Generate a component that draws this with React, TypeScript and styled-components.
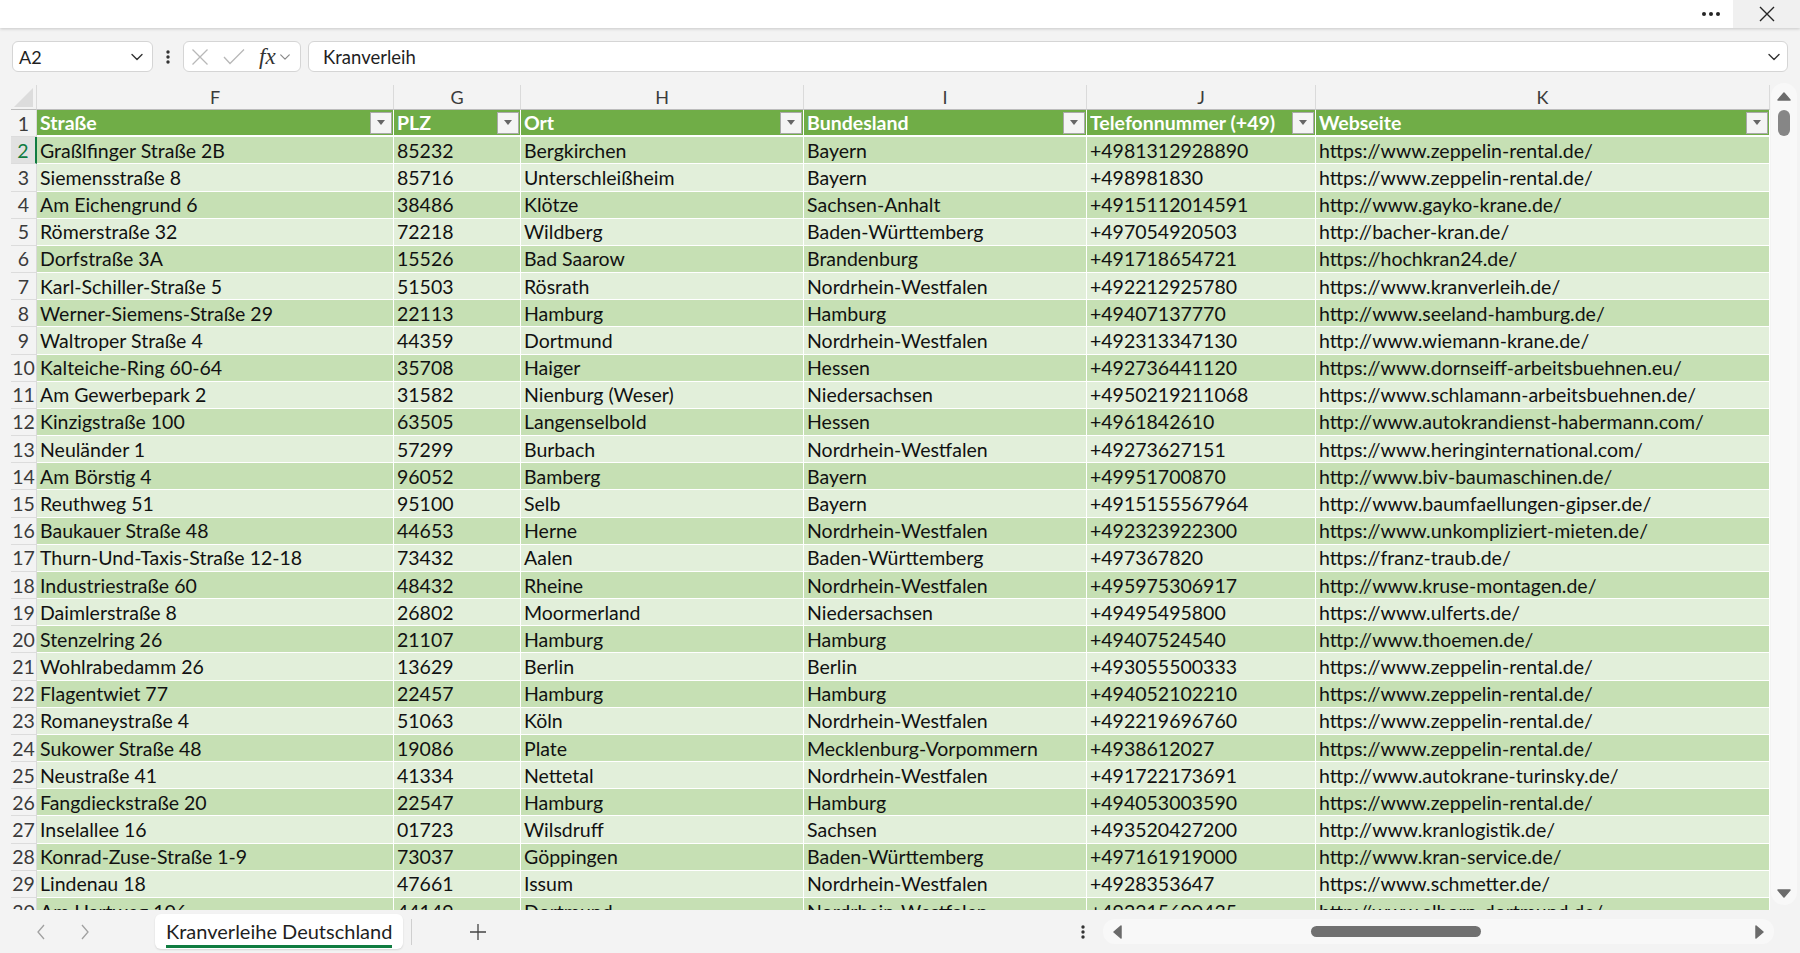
import React, { FC } from 'react'
import styled, { createGlobalStyle } from 'styled-components'

const GlobalStyle = createGlobalStyle`
  html, body {
    margin: 0;
    padding: 0;
    background: #f3f3f3;
  }
`

const COLUMNS = '26px 357px 127px 283px 283px 229px 454px'
const ROW_HEIGHT = 27.18

const Page = styled.div`
  display: flex;
  flex-direction: column;
  width: 1800px;
  height: 953px;
  overflow: hidden;

  background-color: #f3f3f3;
  font-family: Lato, 'Noto Sans', sans-serif;
  color: #1f1f1f;
`

const TopBar = styled.div`
  position: relative;
  z-index: 2;
  display: flex;
  justify-content: flex-end;
  flex: 0 0 28px;

  background-color: white;
  box-shadow: 0 1px 3px rgba(0, 0, 0, 0.18);
`

const MoreButton = styled.div`
  display: flex;
  align-items: center;
  gap: 3px;
  padding: 0 13px 0 11px;
`

const Dot = styled.span`
  width: 4px;
  height: 4px;
  border-radius: 50%;
  background-color: #242424;
`

const CloseButton = styled.div`
  display: grid;
  place-items: center;
  width: 67px;

  background-color: #f0f0f0;
`

const FormulaRow = styled.div`
  display: flex;
  align-items: center;
  flex: 0 0 31px;
  margin-top: 13px;
  padding: 0 12px;
`

const Box = styled.div`
  display: flex;
  align-items: center;
  height: 31px;
  box-sizing: border-box;

  background-color: white;
  border: 1px solid #d5d5d5;
  border-radius: 6px;
`

const NameBox = styled(Box)`
  justify-content: space-between;
  width: 141px;
  padding: 0 8px 0 6px;

  font-size: 18px;
`

const Kebab = styled.div`
  display: grid;
  place-items: center;
  width: 30px;
`

const FxBox = styled(Box)`
  width: 118px;
  padding: 0 4px 0 7px;
`

const Fx = styled.span`
  margin: 0 3px 0 12px;

  font-family: 'Liberation Serif', serif;
  font-style: italic;
  font-size: 23px;
  color: #333;
`

const FormulaInput = styled(Box)`
  flex: 1;
  justify-content: space-between;
  margin-left: 7px;
  padding: 0 6px 0 14px;

  font-size: 18.5px;
`

const SheetArea = styled.div`
  display: flex;
  flex: 1;
  min-height: 0;
  margin-top: 11px;
  padding-left: 11px;
`

const Grid = styled.div`
  width: 1759px;
  padding-top: 2px;
  overflow: hidden;
`

const Row = styled.div<{ $height: number }>`
  display: grid;
  grid-template-columns: ${COLUMNS};
  height: ${(p) => p.$height}px;
`

const ColumnLetter = styled.div`
  display: grid;
  place-items: center;
  box-sizing: border-box;

  border-right: 1px solid #dadada;
  border-bottom: 1px solid #bcbcbc;
  font-size: 18px;
  color: #3b3b3b;
`

const Corner = styled.div`
  position: relative;
  box-sizing: border-box;

  border-bottom: 1px solid #bcbcbc;
  border-right: 1px solid #dadada;

  &::after {
    content: '';
    position: absolute;
    right: 3px;
    bottom: 2px;
    border-style: solid;
    border-width: 0 0 19px 19px;
    border-color: transparent transparent #dcdcdc transparent;
  }
`

const RowNumber = styled.div<{ $active?: boolean }>`
  display: grid;
  place-items: center;
  box-sizing: border-box;

  background-color: ${(p) => (p.$active ? '#e1e1e1' : 'transparent')};
  border-bottom: 1px solid #dcdcdc;
  border-right: ${(p) => (p.$active ? '2px solid #107c41' : '1px solid #dadada')};
  font-size: 19.5px;
  color: ${(p) => (p.$active ? '#107c41' : '#3b3b3b')};
`

const Cell = styled.div<{ $tone: 'head' | 'dark' | 'light' }>`
  display: flex;
  align-items: center;
  box-sizing: border-box;
  padding: 0 0 0 3px;
  overflow: hidden;

  background-color: ${(p) => (p.$tone === 'head' ? '#70ad47' : p.$tone === 'dark' ? '#c6e0b4' : '#e2efda')};
  border-right: 1px solid #ffffff;
  border-bottom: ${(p) => (p.$tone === 'head' ? '2px' : '1px')} solid #ffffff;
  font-size: 19.5px;
  font-weight: ${(p) => (p.$tone === 'head' ? 700 : 400)};
  color: ${(p) => (p.$tone === 'head' ? 'white' : '#111')};
  white-space: nowrap;
`

const HeadLabel = styled.span`
  flex: 1;
  overflow: hidden;
`

const FilterButton = styled.div`
  display: grid;
  place-items: center;
  flex: 0 0 22px;
  height: 22px;
  box-sizing: border-box;
  margin-right: 1px;

  background-color: #f4f4f4;
  border: 1px solid #a9a9a9;

  &::after {
    content: '';
    border-style: solid;
    border-width: 5px 4px 0 4px;
    border-color: #666 transparent transparent transparent;
  }
`

const VScroll = styled.div`
  display: flex;
  flex-direction: column;
  align-items: center;
  width: 26px;
  margin: 0 2px 5px 1px;
  padding: 7px 0 5px;
  box-sizing: border-box;

  background-color: #f8f8f8;
  border-radius: 13px;
`

const VThumb = styled.div`
  width: 12px;
  height: 26px;
  margin-top: 6px;

  background-color: #868686;
  border-radius: 6px;
`

const Spacer = styled.div`
  flex: 1;
`

const BottomBar = styled.div`
  display: flex;
  align-items: center;
  flex: 0 0 43px;
  padding-left: 30px;
`

const NavArrow = styled.div`
  display: grid;
  place-items: center;
  width: 22px;
  margin-right: 22px;
`

const SheetTab = styled.div`
  display: flex;
  align-items: center;
  justify-content: center;
  height: 35px;
  margin-left: 37px;
  padding: 0 11px;
  box-sizing: border-box;

  background-color: white;
  border-radius: 6px;
  box-shadow: 0 1px 2px rgba(0, 0, 0, 0.12);
`

const TabLabel = styled.span`
  padding: 4px 0 2px;

  border-bottom: 3px solid #107c41;
  font-size: 20px;
  color: #1f1f1f;
`

const TabDivider = styled.div`
  width: 1px;
  height: 26px;
  margin-left: 8px;

  background-color: #cfcfcf;
`

const AddSheet = styled.div`
  display: grid;
  place-items: center;
  margin-left: 57px;
`

const HScroll = styled.div`
  display: flex;
  align-items: center;
  justify-content: space-between;
  width: 671px;
  height: 25px;
  margin: 0 26px 0 18px;
  padding: 0 8px;
  box-sizing: border-box;

  background-color: #f8f8f8;
  border-radius: 12px;
`

const HThumb = styled.div`
  width: 170px;
  height: 11px;
  margin-left: 186px;

  background-color: #707070;
  border-radius: 6px;
`

const Chevron: FC<{ size?: number; color?: string }> = ({ size = 14, color = '#333' }) => (
  <svg width={size} height={size} viewBox="0 0 14 14" fill="none">
    <path d="M2 4.5 L7 9.5 L12 4.5" stroke={color} strokeWidth="1.4" strokeLinecap="round" strokeLinejoin="round" />
  </svg>
)

const VDots: FC = () => (
  <svg width="4" height="14" viewBox="0 0 4 14">
    <circle cx="2" cy="2" r="1.7" fill="#333" />
    <circle cx="2" cy="7" r="1.7" fill="#333" />
    <circle cx="2" cy="12" r="1.7" fill="#333" />
  </svg>
)

const Triangle: FC<{ dir: 'up' | 'down' | 'left' | 'right' }> = ({ dir }) => {
  const points = {
    up: '1,10 7,3 13,10',
    down: '1,4 7,11 13,4',
    left: '10,1 3,7 10,13',
    right: '4,1 11,7 4,13',
  }[dir]
  return (
    <svg width="14" height="14" viewBox="0 0 14 14">
      <polygon points={points} fill="#6b6b6b" strokeLinejoin="round" stroke="#6b6b6b" strokeWidth="1.5" />
    </svg>
  )
}

const headers = ['Straße', 'PLZ', 'Ort', 'Bundesland', 'Telefonnummer (+49)', 'Webseite']

const rows: string[][] = [
  ['Graßlfinger Straße 2B', '85232', 'Bergkirchen', 'Bayern', '+4981312928890', 'https://www.zeppelin-rental.de/'],
  ['Siemensstraße 8', '85716', 'Unterschleißheim', 'Bayern', '+498981830', 'https://www.zeppelin-rental.de/'],
  ['Am Eichengrund 6', '38486', 'Klötze', 'Sachsen-Anhalt', '+4915112014591', 'http://www.gayko-krane.de/'],
  ['Römerstraße 32', '72218', 'Wildberg', 'Baden-Württemberg', '+497054920503', 'http://bacher-kran.de/'],
  ['Dorfstraße 3A', '15526', 'Bad Saarow', 'Brandenburg', '+491718654721', 'https://hochkran24.de/'],
  ['Karl-Schiller-Straße 5', '51503', 'Rösrath', 'Nordrhein-Westfalen', '+492212925780', 'https://www.kranverleih.de/'],
  ['Werner-Siemens-Straße 29', '22113', 'Hamburg', 'Hamburg', '+49407137770', 'http://www.seeland-hamburg.de/'],
  ['Waltroper Straße 4', '44359', 'Dortmund', 'Nordrhein-Westfalen', '+492313347130', 'http://www.wiemann-krane.de/'],
  ['Kalteiche-Ring 60-64', '35708', 'Haiger', 'Hessen', '+492736441120', 'https://www.dornseiff-arbeitsbuehnen.eu/'],
  ['Am Gewerbepark 2', '31582', 'Nienburg (Weser)', 'Niedersachsen', '+4950219211068', 'https://www.schlamann-arbeitsbuehnen.de/'],
  ['Kinzigstraße 100', '63505', 'Langenselbold', 'Hessen', '+4961842610', 'http://www.autokrandienst-habermann.com/'],
  ['Neuländer 1', '57299', 'Burbach', 'Nordrhein-Westfalen', '+49273627151', 'https://www.heringinternational.com/'],
  ['Am Börstig 4', '96052', 'Bamberg', 'Bayern', '+49951700870', 'http://www.biv-baumaschinen.de/'],
  ['Reuthweg 51', '95100', 'Selb', 'Bayern', '+4915155567964', 'http://www.baumfaellungen-gipser.de/'],
  ['Baukauer Straße 48', '44653', 'Herne', 'Nordrhein-Westfalen', '+492323922300', 'https://www.unkompliziert-mieten.de/'],
  ['Thurn-Und-Taxis-Straße 12-18', '73432', 'Aalen', 'Baden-Württemberg', '+497367820', 'https://franz-traub.de/'],
  ['Industriestraße 60', '48432', 'Rheine', 'Nordrhein-Westfalen', '+495975306917', 'http://www.kruse-montagen.de/'],
  ['Daimlerstraße 8', '26802', 'Moormerland', 'Niedersachsen', '+49495495800', 'https://www.ulferts.de/'],
  ['Stenzelring 26', '21107', 'Hamburg', 'Hamburg', '+49407524540', 'http://www.thoemen.de/'],
  ['Wohlrabedamm 26', '13629', 'Berlin', 'Berlin', '+493055500333', 'https://www.zeppelin-rental.de/'],
  ['Flagentwiet 77', '22457', 'Hamburg', 'Hamburg', '+494052102210', 'https://www.zeppelin-rental.de/'],
  ['Romaneystraße 4', '51063', 'Köln', 'Nordrhein-Westfalen', '+492219696760', 'https://www.zeppelin-rental.de/'],
  ['Sukower Straße 48', '19086', 'Plate', 'Mecklenburg-Vorpommern', '+4938612027', 'https://www.zeppelin-rental.de/'],
  ['Neustraße 41', '41334', 'Nettetal', 'Nordrhein-Westfalen', '+491722173691', 'http://www.autokrane-turinsky.de/'],
  ['Fangdieckstraße 20', '22547', 'Hamburg', 'Hamburg', '+494053003590', 'https://www.zeppelin-rental.de/'],
  ['Inselallee 16', '01723', 'Wilsdruff', 'Sachsen', '+493520427200', 'http://www.kranlogistik.de/'],
  ['Konrad-Zuse-Straße 1-9', '73037', 'Göppingen', 'Baden-Württemberg', '+497161919000', 'http://www.kran-service.de/'],
  ['Lindenau 18', '47661', 'Issum', 'Nordrhein-Westfalen', '+4928353647', 'https://www.schmetter.de/'],
  ['Am Hartweg 106', '44149', 'Dortmund', 'Nordrhein-Westfalen', '+492315690435', 'http://www.alborn-dortmund.de/'],
]

const letters = ['F', 'G', 'H', 'I', 'J', 'K']

export default function App() {
  return (
    <>
      <GlobalStyle />
      <Page>
        <TopBar>
          <MoreButton>
            <Dot />
            <Dot />
            <Dot />
          </MoreButton>
          <CloseButton>
            <svg width="16" height="16" viewBox="0 0 16 16">
              <path d="M1 1 L15 15 M15 1 L1 15" stroke="#242424" strokeWidth="1.4" />
            </svg>
          </CloseButton>
        </TopBar>

        <FormulaRow>
          <NameBox>
            <span>A2</span>
            <Chevron />
          </NameBox>
          <Kebab>
            <VDots />
          </Kebab>
          <FxBox>
            <svg width="18" height="18" viewBox="0 0 18 18">
              <path d="M1.5 1.5 L16.5 16.5 M16.5 1.5 L1.5 16.5" stroke="#b8b8b8" strokeWidth="1.3" />
            </svg>
            <svg width="26" height="18" viewBox="0 0 26 18" style={{ marginLeft: 12 }}>
              <path d="M3 9 L9 15.5 L23 1.5" stroke="#b8b8b8" strokeWidth="1.3" fill="none" />
            </svg>
            <Fx>fx</Fx>
            <Chevron size={12} color="#888" />
          </FxBox>
          <FormulaInput>
            <span>Kranverleih</span>
            <Chevron />
          </FormulaInput>
        </FormulaRow>

        <SheetArea>
          <Grid>
            <Row $height={25}>
              <Corner />
              {letters.map((l) => (
                <ColumnLetter key={l}>{l}</ColumnLetter>
              ))}
            </Row>
            <Row $height={ROW_HEIGHT}>
              <RowNumber>1</RowNumber>
              {headers.map((h) => (
                <Cell key={h} $tone="head">
                  <HeadLabel>{h}</HeadLabel>
                  <FilterButton />
                </Cell>
              ))}
            </Row>
            {rows.map((r, i) => (
              <Row key={i} $height={ROW_HEIGHT}>
                <RowNumber $active={i === 0}>{i + 2}</RowNumber>
                {r.map((v, j) => (
                  <Cell key={j} $tone={i % 2 === 0 ? 'dark' : 'light'}>
                    {v}
                  </Cell>
                ))}
              </Row>
            ))}
          </Grid>
          <VScroll>
            <Triangle dir="up" />
            <VThumb />
            <Spacer />
            <Triangle dir="down" />
          </VScroll>
        </SheetArea>

        <BottomBar>
          <NavArrow>
            <svg width="10" height="16" viewBox="0 0 10 16">
              <path d="M8 1 L2 8 L8 15" stroke="#a0a0a0" strokeWidth="1.3" fill="none" />
            </svg>
          </NavArrow>
          <NavArrow>
            <svg width="10" height="16" viewBox="0 0 10 16">
              <path d="M2 1 L8 8 L2 15" stroke="#a0a0a0" strokeWidth="1.3" fill="none" />
            </svg>
          </NavArrow>
          <SheetTab>
            <TabLabel>Kranverleihe Deutschland</TabLabel>
          </SheetTab>
          <TabDivider />
          <AddSheet>
            <svg width="18" height="18" viewBox="0 0 18 18">
              <path d="M9 1 V17 M1 9 H17" stroke="#444" strokeWidth="1.3" />
            </svg>
          </AddSheet>
          <Spacer />
          <VDots />
          <HScroll>
            <Triangle dir="left" />
            <HThumb />
            <Spacer />
            <Triangle dir="right" />
          </HScroll>
        </BottomBar>
      </Page>
    </>
  )
}
